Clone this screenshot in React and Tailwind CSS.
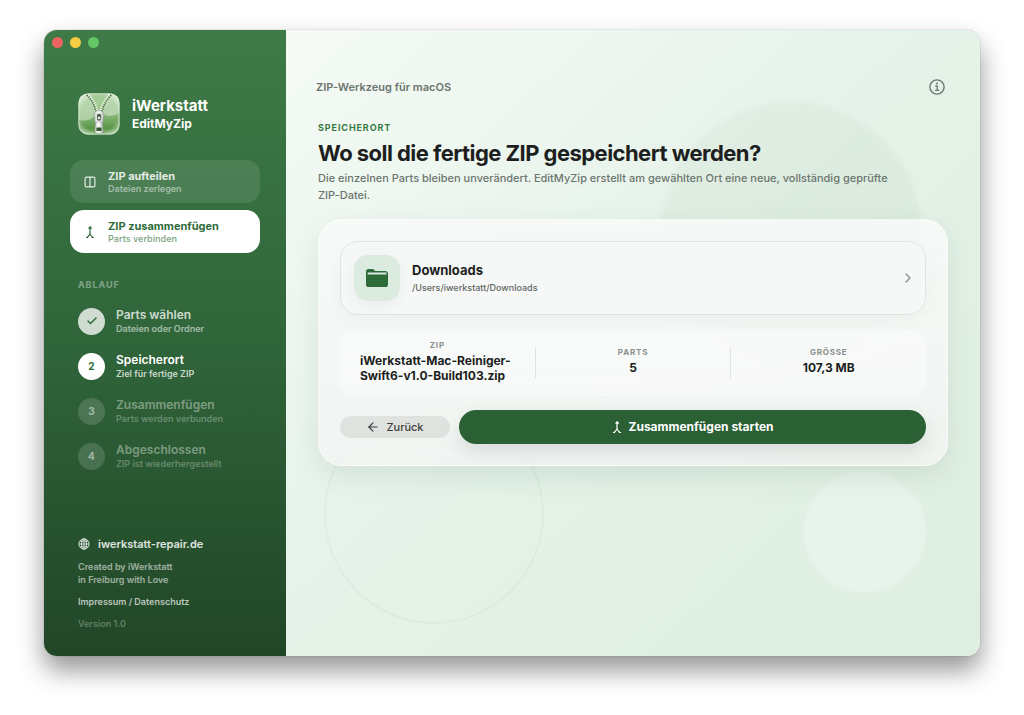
import React, { useState } from 'react';
import { ArrowLeft, Check, ChevronRight } from 'lucide-react';

const MODES = [
  { id: 'split', title: 'ZIP aufteilen', text: 'Dateien zerlegen' },
  { id: 'merge', title: 'ZIP zusammenfügen', text: 'Parts verbinden' },
];

const STEPS = [
  { title: 'Parts wählen', text: 'Dateien oder Ordner', state: 'done' },
  { title: 'Speicherort', text: 'Ziel für fertige ZIP', state: 'active' },
  { title: 'Zusammenfügen', text: 'Parts werden verbunden', state: 'open' },
  { title: 'Abgeschlossen', text: 'ZIP ist wiederhergestellt', state: 'open' },
];

const STEP_STYLES = {
  done: { circle: 'bg-[#d0dcd1] text-[#2f6b39]', title: 'text-white/75', text: 'text-white/55' },
  active: { circle: 'bg-white text-[#2f6b39]', title: 'text-white', text: 'text-white/75' },
  open: { circle: 'bg-white/15 text-white/50', title: 'text-white/40', text: 'text-white/30' },
};

function MergeIcon({ className }) {
  return (
    <svg viewBox="0 0 12 14" className={className} fill="none" stroke="currentColor" strokeWidth="1.2" strokeLinecap="round" strokeLinejoin="round" aria-hidden="true">
      <path d="M6 2.5V8.2C6 9.8 4.8 10.6 3.6 12M6 8.2C6 9.8 7.2 10.6 8.4 12" />
      <path d="M2.4 12.5H3.7M8.3 12.5H9.6" strokeWidth="1" />
      <path d="M6 1.4L4.6 3.4H7.4Z" fill="currentColor" strokeWidth="0.8" />
    </svg>
  );
}

function SplitIcon() {
  return (
    <svg viewBox="0 0 12 14" className="h-[14px] w-3" fill="none" stroke="currentColor" strokeWidth="1.2" aria-hidden="true">
      <rect x="1.1" y="2.1" width="9.8" height="9.8" rx="1.4" />
      <path d="M6 2.1V11.9" />
    </svg>
  );
}

function FolderIcon() {
  return (
    <svg viewBox="0 0 24 20" className="h-5 w-6" fill="#2f6b39" aria-hidden="true">
      <path d="M1 5.2V3.6C1 2 1.9 1 3.5 1H7C8 1 8.5 1.3 9.1 1.8L9.8 2.4C10.2 2.8 10.6 2.9 11.2 2.9H20.3C22 2.9 23 3.8 23 5.4V5.6C22.5 4.9 21.7 4.5 20.6 4.5H3.4C2.3 4.5 1.5 4.8 1 5.2Z" />
      <path d="M1 3.6H2.6V8H1ZM21.4 5H23V8H21.4Z" />
      <path d="M1 7.6C1 6.9 1.7 6.5 2.6 6.5H21.4C22.3 6.5 23 6.9 23 7.6V16.4C23 18.1 22.1 19 20.4 19H3.6C1.9 19 1 18.1 1 16.4Z" />
    </svg>
  );
}

function InfoIcon() {
  return (
    <svg viewBox="0 0 16 16" className="size-4" fill="none" stroke="currentColor" strokeLinecap="round" strokeLinejoin="round" aria-hidden="true">
      <circle cx="8" cy="8" r="7.1" strokeWidth="1.4" />
      <path d="M6.8 7H8.2V11.2M6.5 11.3H9.8" strokeWidth="1.3" />
      <circle cx="8" cy="4.6" r="1" fill="currentColor" stroke="none" />
    </svg>
  );
}

function GlobeIcon() {
  return (
    <svg viewBox="0 0 12 12" className="size-3" fill="none" stroke="currentColor" strokeWidth="0.9" aria-hidden="true">
      <circle cx="6" cy="6" r="5.1" />
      <ellipse cx="6" cy="6" rx="2.4" ry="5.1" />
      <path d="M6 0.9V11.1M0.9 6H11.1M1.8 3.2H10.2M1.8 8.8H10.2" />
    </svg>
  );
}

function AppLogo() {
  return (
    <svg viewBox="0 0 42 42" className="size-[42px] shrink-0" aria-hidden="true">
      <defs>
        <linearGradient id="logoBase" x1="0" y1="0" x2="0" y2="1">
          <stop offset="0" stopColor="#a9cf9c" />
          <stop offset="0.55" stopColor="#83b673" />
          <stop offset="0.85" stopColor="#5a9648" />
          <stop offset="1" stopColor="#8dbb7d" />
        </linearGradient>
        <linearGradient id="logoGloss" x1="0" y1="0" x2="0" y2="1">
          <stop offset="0" stopColor="#fff" stopOpacity="0.25" />
          <stop offset="1" stopColor="#fff" stopOpacity="0.4" />
        </linearGradient>
        <linearGradient id="logoMetal" x1="0" y1="0" x2="1" y2="0">
          <stop offset="0" stopColor="#c3c7c3" />
          <stop offset="0.45" stopColor="#fff" />
          <stop offset="1" stopColor="#b4b9b4" />
        </linearGradient>
        <radialGradient id="logoGlow" cx="0.5" cy="0.5" r="0.72">
          <stop offset="0.62" stopColor="#fff" stopOpacity="0" />
          <stop offset="1" stopColor="#fff" stopOpacity="0.9" />
        </radialGradient>
      </defs>
      <rect x="0.5" y="0.5" width="41" height="41" rx="9.5" fill="url(#logoBase)" />
      <path d="M1 10C1 4 4 1 10 1C15 7 17.5 13 18.5 20C16 26 8 29 1 27Z" fill="url(#logoGloss)" />
      <path d="M41 10C41 4 38 1 32 1C27 7 24.5 13 23.5 20C28 24 35 24 41 20Z" fill="url(#logoGloss)" />
      <path d="M10 1H32C26 7 23 13 21 20C19 13 16 7 10 1Z" fill="#a3cb95" />
      <rect x="0.5" y="0.5" width="41" height="41" rx="9.5" fill="url(#logoGlow)" />
      <path d="M8.8 2C14.4 7 17 13 18.4 20M33.2 2C27.6 7 25 13 23.6 20" fill="none" stroke="#47693f" strokeWidth="1.8" strokeDasharray="1.4 0.9" />
      <path d="M10.6 2C15.8 7 18.4 13 19.7 19M31.4 2C26.2 7 23.6 13 22.3 19" fill="none" stroke="#f2f6f0" strokeWidth="2" strokeDasharray="1.4 0.9" />
      <path d="M16 21.4C16 18.8 18 17.6 21 17.6C24 17.6 26 18.8 26 21.4L25 30H17Z" fill="url(#logoMetal)" stroke="#7c857b" strokeWidth="0.4" />
      <path d="M19 22.5C19 21.3 19.8 20.8 21 20.8C22.2 20.8 23 21.3 23 22.5V26C23 27.2 22.2 27.8 21 27.8C19.8 27.8 19 27.2 19 26Z" fill="#566452" />
      <circle cx="21" cy="25" r="1.3" fill="#e9ece8" />
      <path d="M17.6 29H24.4L25.2 38.5C25.2 39.8 24.4 40.3 23.2 40.3H18.8C17.6 40.3 16.8 39.8 16.8 38.5Z" fill="url(#logoMetal)" stroke="#7c857b" strokeWidth="0.4" />
      <rect x="18.4" y="34.6" width="5.2" height="3.4" rx="0.5" fill="#2f5a2b" />
      <rect x="0.9" y="0.9" width="40.2" height="40.2" rx="9.2" fill="none" stroke="#e5f1e0" strokeOpacity="0.65" />
    </svg>
  );
}

function Sidebar({ mode, setMode }) {
  return (
    <aside className="flex w-[242px] shrink-0 flex-col bg-linear-to-b from-[#3e7b47] via-[#30653a] to-[#214627]">
      <div className="flex gap-[7px] px-2 pt-[7px]">
        <button aria-label="Schließen" className="size-[11px] rounded-full bg-[#ed6560]" />
        <button aria-label="Minimieren" className="size-[11px] rounded-full bg-[#f7cd45]" />
        <button aria-label="Vergrößern" className="size-[11px] rounded-full bg-[#63c765]" />
      </div>

      <div className="flex flex-1 flex-col px-[26px] pt-[45px] pb-[26px]">
        {/* Brand */}
        <div className="flex items-center gap-3 px-2 text-white">
          <AppLogo />
          <div>
            <p className="text-[15px] leading-5 font-bold">iWerkstatt</p>
            <p className="text-xs leading-4 font-bold">EditMyZip</p>
          </div>
        </div>

        {/* Mode switch */}
        <nav className="mt-[25px] flex flex-col gap-[7px]">
          {MODES.map((m) => {
            const selected = mode === m.id;
            return (
              <button
                key={m.id}
                onClick={() => setMode(m.id)}
                className={`flex h-[43px] items-center gap-3 rounded-[14px] px-[14px] text-left ${
                  selected ? 'bg-white text-[#2f6b39]' : 'bg-white/10 text-white/85'
                }`}
              >
                {m.id === 'split' ? <SplitIcon /> : <MergeIcon className="h-[14px] w-3" />}
                <span>
                  <span className="block text-[11px] leading-[14px] font-bold">{m.title}</span>
                  <span className={`block text-[9px] leading-3 font-semibold ${selected ? 'text-[#2f6b39]/60' : 'text-white/50'}`}>
                    {m.text}
                  </span>
                </span>
              </button>
            );
          })}
        </nav>

        {/* Steps */}
        <h2 className="mt-[26px] px-2 text-[9px] leading-3 font-bold tracking-widest text-white/40">ABLAUF</h2>
        <ol className="mt-[15px] flex flex-col gap-[15px] px-2">
          {STEPS.map((step, i) => {
            const s = STEP_STYLES[step.state];
            return (
              <li key={step.title} className="flex h-[30px] items-center gap-[11px]">
                <span className={`flex size-[27px] shrink-0 items-center justify-center rounded-full text-[10px] font-bold ${s.circle}`}>
                  {step.state === 'done' ? <Check className="size-3" strokeWidth={3} /> : i + 1}
                </span>
                <div>
                  <p className={`text-xs leading-4 font-semibold ${s.title}`}>{step.title}</p>
                  <p className={`text-[9px] leading-3 font-semibold ${s.text}`}>{step.text}</p>
                </div>
              </li>
            );
          })}
        </ol>

        {/* Footer */}
        <footer className="mt-auto px-2 text-[9px] leading-[13px] font-semibold text-white/55">
          <a href="#website" className="flex items-center gap-2 text-[11px] leading-4 text-white/85">
            <GlobeIcon />
            iwerkstatt-repair.de
          </a>
          <p className="mt-2">
            Created by iWerkstatt
            <br />
            in Freiburg with Love
          </p>
          <a href="#impressum" className="mt-[9px] block text-white/70">Impressum / Datenschutz</a>
          <p className="mt-[9px] text-white/30">Version 1.0</p>
        </footer>
      </div>
    </aside>
  );
}

function Stat({ label, value }) {
  return (
    <div className="flex flex-1 flex-col items-center justify-center px-5">
      <dt className="text-[8px] leading-3 font-bold tracking-widest text-[#8b908c]">{label}</dt>
      <dd className="mt-[2px] mb-1 text-xs leading-[15px] font-bold text-[#1d1f1e]">{value}</dd>
    </div>
  );
}

export default function App() {
  const [mode, setMode] = useState('merge');

  return (
    <div className="flex min-h-screen bg-white px-11 pt-[30px] pb-[59px] font-['Inter',sans-serif]">
      <div className="flex flex-1 overflow-hidden rounded-[13px] shadow-[0_0_1px_rgba(0,0,0,0.5),0_14px_26px_rgba(0,0,0,0.42)]">
        <Sidebar mode={mode} setMode={setMode} />

        <main className="relative isolate min-w-0 flex-1 bg-linear-to-br from-[#f5faf6] via-[#e4f2e8] to-[#deeee1]">
          {/* Background shapes */}
          <div className="absolute top-[72px] right-[59px] -z-10 size-[260px] rounded-full bg-[#2f6b39]/4 blur-[2px]" />
          <div className="absolute bottom-8 left-[38px] -z-10 size-[220px] rounded-full border-2 border-[#2f6b39]/4" />
          <div className="absolute right-[54px] bottom-[63px] -z-10 size-[122px] rounded-full bg-white/25 blur-[1px]" />

          <header className="flex items-center justify-between pt-[49px] pr-[35px] pl-[30px] text-[#6c756e]">
            <p className="text-[11px] leading-4 font-semibold">ZIP-Werkzeug für macOS</p>
            <button aria-label="Info">
              <InfoIcon />
            </button>
          </header>

          <div className="px-8 pt-[27px]">
            <p className="text-[9px] leading-3 font-bold tracking-widest text-[#38793f]">SPEICHERORT</p>
            <h1 className="mt-[3px] text-[22px] leading-8 font-bold tracking-tight text-[#1d1f1e]">
              Wo soll die fertige ZIP gespeichert werden?
            </h1>
            <p className="mt-px max-w-[590px] text-[11px] leading-[17px] font-medium text-[#6c756e]">
              Die einzelnen Parts bleiben unverändert. EditMyZip erstellt am gewählten Ort eine neue, vollständig geprüfte ZIP-Datei.
            </p>

            <section className="mt-[15px] flex flex-col gap-[14px] rounded-3xl border border-white/50 bg-linear-to-b from-[#f7faf8]/90 to-[#f2f5f3]/85 p-[21px] shadow-[0_10px_28px_rgba(40,80,50,0.1)]">
              <button className="flex h-[74px] items-center gap-3 rounded-[18px] border border-[#dbe8de] bg-[#f6f7f7]/80 px-[13px] text-left shadow-[0_6px_18px_rgba(0,0,0,0.03)]">
                <span className="flex size-[46px] items-center justify-center rounded-[14px] bg-[#dcebdf] shadow-[0_4px_16px_rgba(0,0,0,0.05)]">
                  <FolderIcon />
                </span>
                <span className="flex-1">
                  <span className="block text-[13px] leading-4 font-bold text-[#1d1f1e]">Downloads</span>
                  <span className="mt-1 block text-[9px] leading-3 font-medium text-[#5f6661]">/Users/iwerkstatt/Downloads</span>
                </span>
                <ChevronRight className="-mr-1 size-4 text-[#8b908c]" />
              </button>

              <dl className="flex h-[67px] items-center rounded-2xl bg-white/40">
                <Stat label="ZIP" value="iWerkstatt-Mac-Reiniger-Swift6-v1.0-Build103.zip" />
                <div className="h-[30px] w-px bg-[#dfe3e0]" />
                <Stat label="PARTS" value="5" />
                <div className="h-[30px] w-px bg-[#dfe3e0]" />
                <Stat label="GRÖSSE" value="107,3 MB" />
              </dl>

              <div className="flex items-center gap-[9px]">
                <button className="flex h-[22px] w-[110px] items-center justify-center gap-[6px] rounded-full bg-[#e0e2e0] text-[11px] font-medium text-[#3b3f3c]">
                  <ArrowLeft className="size-[14px]" />
                  Zurück
                </button>
                <button className="flex h-[34px] flex-1 items-center justify-center gap-[5px] rounded-full bg-[#2b5f34] text-xs font-bold text-white shadow-[0_8px_20px_rgba(0,0,0,0.1)]">
                  <MergeIcon className="h-[14px] w-3" />
                  Zusammenfügen starten
                </button>
              </div>
            </section>
          </div>
        </main>
      </div>
    </div>
  );
}
